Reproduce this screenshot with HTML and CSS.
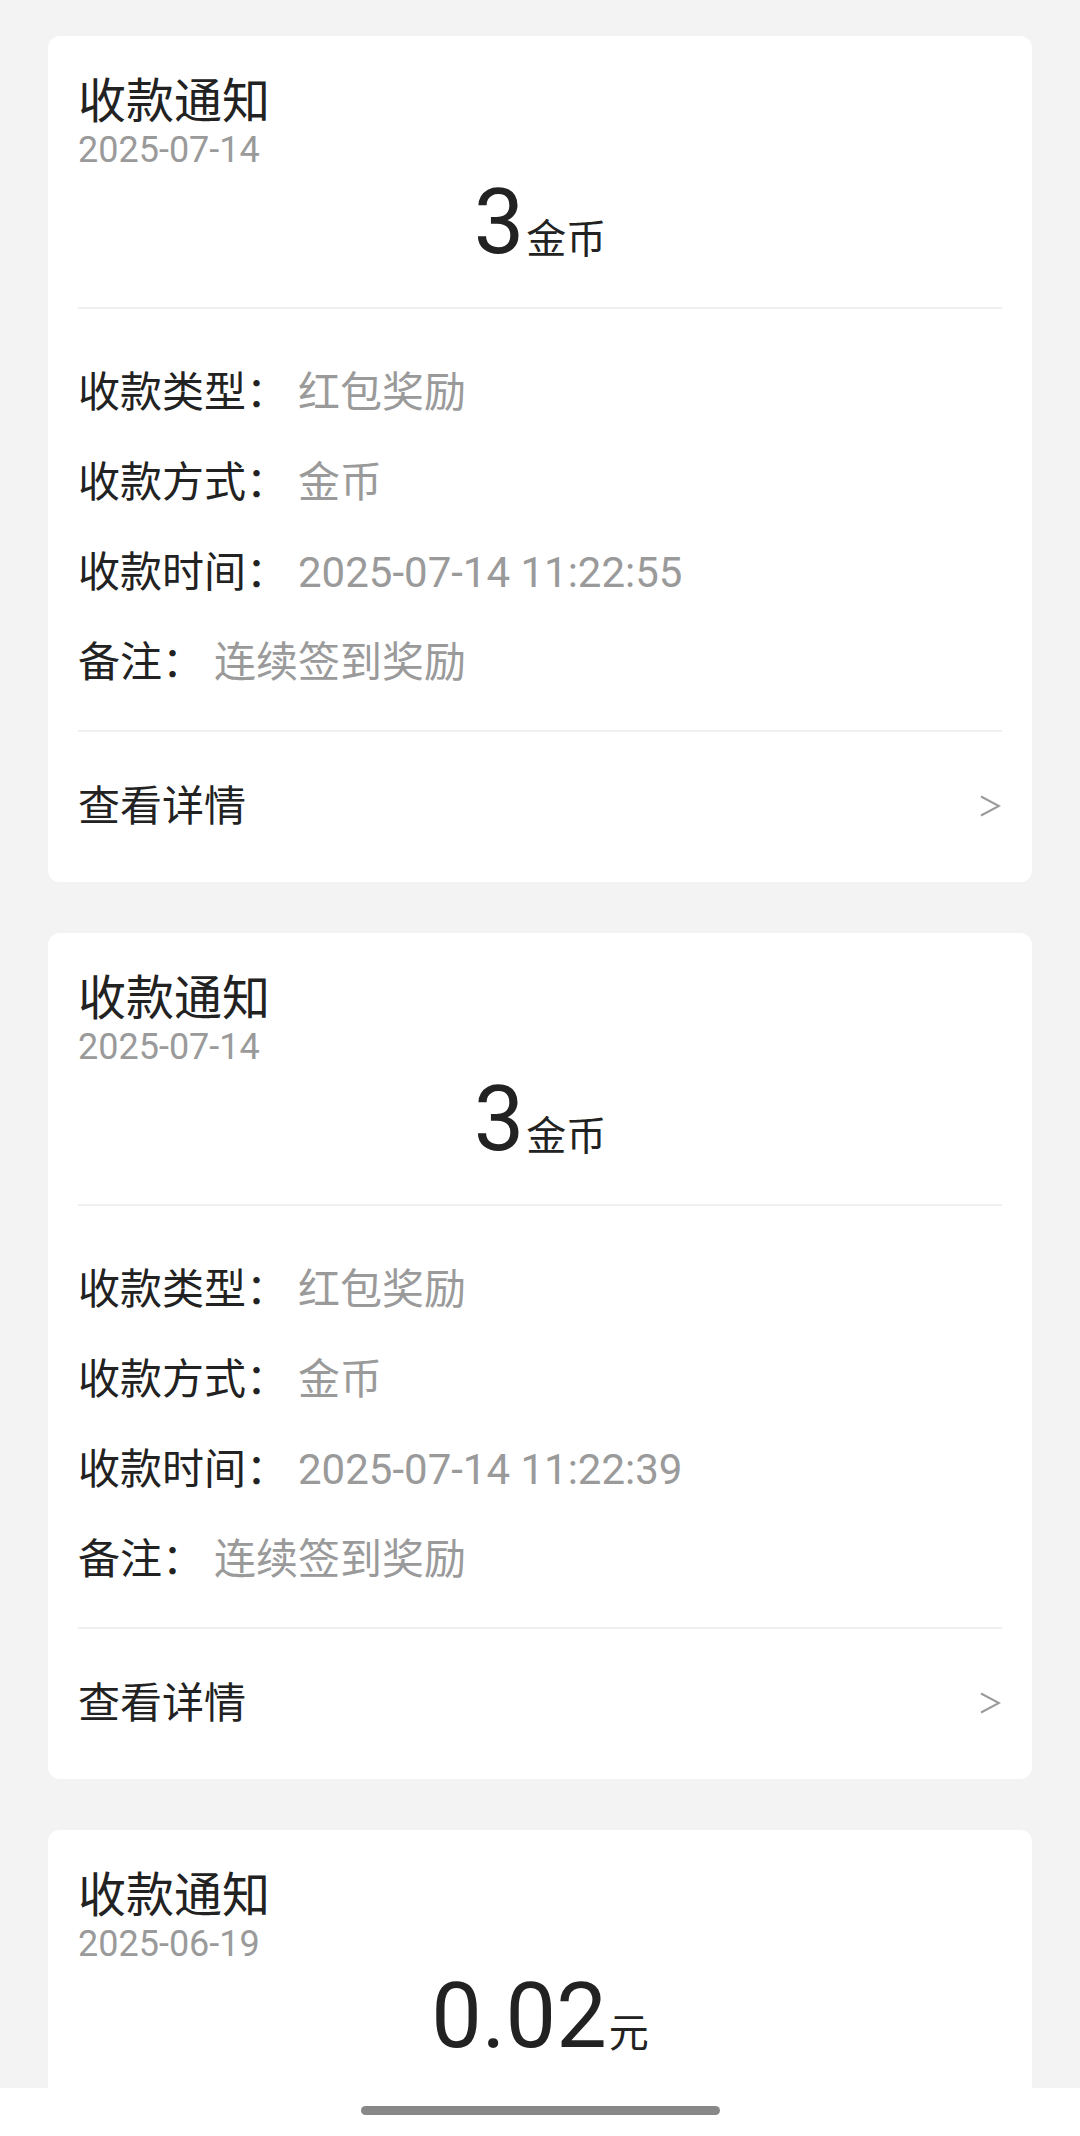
FILE: index.html
```html
<!DOCTYPE html>
<html lang="zh-CN">
<head>
    <meta charset="UTF-8">
    <meta name="viewport" content="width=device-width, initial-scale=1.0">
    <title>收款通知</title>
    <link rel="stylesheet" href="styles.css">
</head>
<body>
    <div class="list">
        <div class="card">
            <div class="card-title">收款通知</div>
            <div class="card-date">2025-07-14</div>
            <div class="amount">3<span class="unit">金币</span></div>
            <div class="divider"></div>
            <div class="info">
                <div class="row"><span class="label">收款类型：</span><span class="value">红包奖励</span></div>
                <div class="row"><span class="label">收款方式：</span><span class="value">金币</span></div>
                <div class="row"><span class="label">收款时间：</span><span class="value">2025-07-14 11:22:55</span></div>
                <div class="row"><span class="label">备注：</span><span class="value">连续签到奖励</span></div>
            </div>
            <div class="divider"></div>
            <div class="card-footer">
                <span>查看详情</span>
                <svg class="arrow" width="22" height="22" viewBox="0 0 22 22">
                    <polyline points="2,1.5 20,11 2,20.5" fill="none" stroke="#9a9a9a" stroke-width="2"/>
                </svg>
            </div>
        </div>

        <div class="card">
            <div class="card-title">收款通知</div>
            <div class="card-date">2025-07-14</div>
            <div class="amount">3<span class="unit">金币</span></div>
            <div class="divider"></div>
            <div class="info">
                <div class="row"><span class="label">收款类型：</span><span class="value">红包奖励</span></div>
                <div class="row"><span class="label">收款方式：</span><span class="value">金币</span></div>
                <div class="row"><span class="label">收款时间：</span><span class="value">2025-07-14 11:22:39</span></div>
                <div class="row"><span class="label">备注：</span><span class="value">连续签到奖励</span></div>
            </div>
            <div class="divider"></div>
            <div class="card-footer">
                <span>查看详情</span>
                <svg class="arrow" width="22" height="22" viewBox="0 0 22 22">
                    <polyline points="2,1.5 20,11 2,20.5" fill="none" stroke="#9a9a9a" stroke-width="2"/>
                </svg>
            </div>
        </div>

        <div class="card card-last">
            <div class="card-title">收款通知</div>
            <div class="card-date">2025-06-19</div>
            <div class="amount">0.02<span class="unit">元</span></div>
        </div>
    </div>

    <!-- gesture bar -->
    <div class="nav-bar">
        <div class="nav-handle"></div>
    </div>
</body>
</html>
```

FILE: styles.css
```css
body {
    font-family: Roboto, "Noto Sans CJK SC", sans-serif;
    background-color: #f3f3f3;
    color: #222;
    margin: 0;
    padding: 0;
}
.list {
    padding: 36px 48px 0;
}
.card {
    background-color: #fff;
    border-radius: 12px;
    padding: 40px 30px 0;
    margin-bottom: 51px;
}
.card-last {
    padding-bottom: 60px;
    margin-bottom: 0;
}
.card-title {
    font-size: 48px;
    line-height: 52px;
}
.card-date {
    font-size: 36px;
    line-height: 44px;
    color: #9a9a9a;
}
.amount {
    font-size: 90px;
    line-height: 102px;
    text-align: center;
}
.unit {
    font-size: 40px;
    line-height: 40px;
    margin-left: 2px;
}
.divider {
    height: 2px;
    background-color: #f0f0f0;
}
.amount + .divider {
    margin-top: 33px;
}
.info {
    padding-top: 39px;
    padding-bottom: 22px;
}
.row {
    font-size: 42px;
    line-height: 90px;
}
.value {
    color: #9a9a9a;
    margin-left: 10px;
}
.card-footer {
    display: flex;
    justify-content: space-between;
    align-items: center;
    height: 150px;
    font-size: 42px;
    line-height: 150px;
}
.arrow {
    margin-right: 1px;
    margin-bottom: 3px;
}
.nav-bar {
    position: fixed;
    left: 0;
    right: 0;
    bottom: 0;
    height: 48px;
    background-color: #fff;
}
.nav-handle {
    width: 359px;
    height: 9px;
    margin: 18px auto 0;
    border-radius: 5px;
    background-color: #888;
}
```
